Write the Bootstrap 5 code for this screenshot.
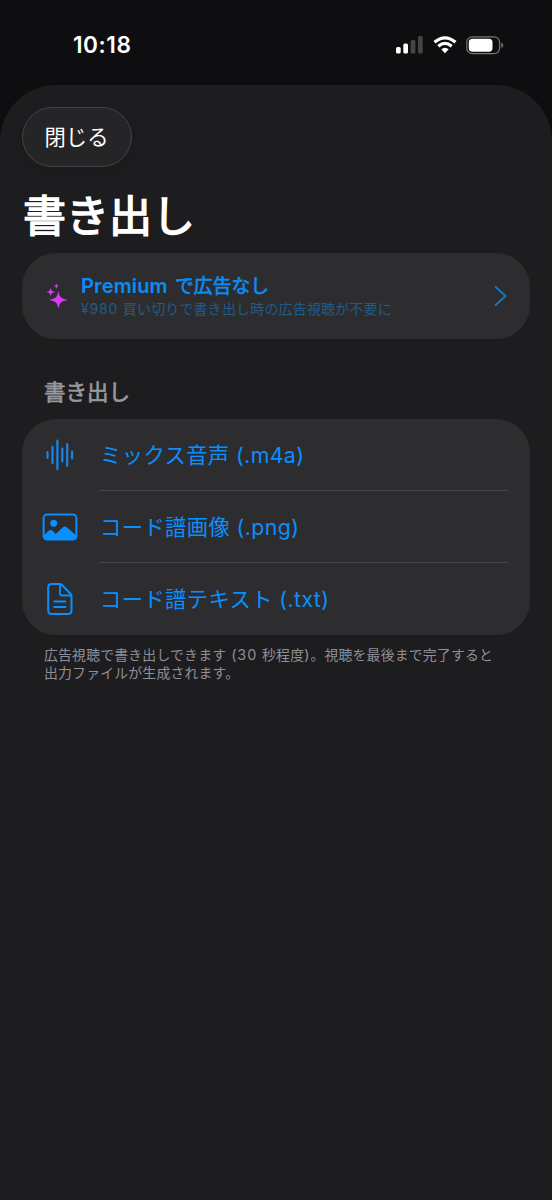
<!DOCTYPE html>
<html lang="ja" data-bs-theme="dark">
<head>
<meta charset="utf-8">
<meta name="viewport" content="width=device-width, initial-scale=1">
<title>書き出し</title>
<link href="https://cdn.jsdelivr.net/npm/bootstrap@5.3.0/dist/css/bootstrap.min.css" rel="stylesheet">
<style>
  body { background: #0e0e10; color: #fff; font-family: Inter, "Noto Sans CJK JP", sans-serif; min-height: 1200px; overflow: hidden; }
  svg { display: block; flex: none; }
  .statusbar { height: 85px; padding: 5px 48px 0 73px; }
  .clock { font-size: 22.6px; font-weight: 600; letter-spacing: .55px; }
  .wifi, .battery { margin-left: 9px; }
  .sheet { background: #1d1d1f; border-radius: 56px 56px 0 0; height: 1115px; padding: 22px 22px 0; }
  .close-btn { width: 110px; height: 60px; background: #252527; border: 1px solid #434345; color: #fff; font-size: 21.3px; line-height: 1; box-shadow: 0 4px 18px rgba(0,0,0,.12); padding: 2px 1px 0 0; }
  .page-title { font-size: 43px; line-height: 50px; font-weight: 400; -webkit-text-stroke: 1.5px #fff; margin: 0; padding: 24px 0 0 1px; height: 86px; }
  .panel { background: #2d2d2f; border-radius: 34px; }
  .premium { height: 86px; padding: 0 22px 0 24px; color: #0a8df8; }
  .premium-copy { margin-left: 13px; padding-top: 1px; }
  .premium-name { font-size: 18.8px; line-height: 23px; font-weight: 400; -webkit-text-stroke: .6px #0a8df8; }
  .premium-brand { font-size: 20px; font-weight: 600; letter-spacing: .15px; margin-right: 2px; -webkit-text-stroke: 0; }
  .premium-note { font-size: 14px; line-height: 21px; color: #225a88; letter-spacing: .16px; }
  .premium-price { letter-spacing: .8px; }
  .section-name { font-size: 21.5px; line-height: 30px; font-weight: 400; -webkit-text-stroke: .65px #98989f; color: #98989f; margin: 38px 0 12px 22px; }
  .export-row { height: 72px; padding: 0 22px 0 20px; color: #0a8fff; text-decoration: none; }
  .export-icon { width: 36px; margin-right: 21px; }
  .export-label { font-size: 21.3px; height: 72px; letter-spacing: .4px; padding: 2px 0 0 1px; }
  .export-row:not(:last-child) .export-label { border-bottom: 1px solid #454548; }
  .footnote { font-size: 13.9px; line-height: 18px; color: #8f8f96; margin: 11px 0 0 22px; letter-spacing: .16px; white-space: nowrap; }
  .footnote-num { font-size: 14.4px; line-height: 1; letter-spacing: .9px; }
</style>
</head>
<body>
<header class="statusbar d-flex align-items-center justify-content-between">
  <div class="clock">10:18</div>
  <div class="d-flex align-items-center">
    <svg width="28" height="18" viewBox="0 0 28 18"><g fill="#fff"><rect x="0" y="11" width="4.700" height="6.500" rx="1.500"/><rect x="7.300" y="7.500" width="4.700" height="10" rx="1.500"/></g><g fill="#454547"><rect x="14.700" y="4" width="4.700" height="13.500" rx="1.500"/><rect x="22" y="0" width="4.700" height="17.500" rx="1.500"/></g></svg>
    <svg class="wifi" width="24" height="18" viewBox="0 0 24 18" fill="none" stroke="#fff" stroke-width="3.200"><path d="M1.500 6.200Q12-2.600 22.500 6.200"/><path d="M5.300 10.200Q12 4.400 18.700 10.200"/><path d="M12 17.200L8.300 13.300Q12 10.200 15.700 13.300Z" fill="#fff" stroke="none"/></svg>
    <svg class="battery" width="38" height="19" viewBox="0 0 38 19"><rect x=".8" y=".8" width="32.800" height="16.900" rx="5.400" fill="none" stroke="#77777a" stroke-width="1.200"/><rect x="2.800" y="2.700" width="23.700" height="13" rx="3.700" fill="#fff"/><path d="M35.400 6.400q1.800.7 1.800 2.800t-1.800 2.800z" fill="#77777a"/></svg>
  </div>
</header>
<main class="sheet">
  <button class="close-btn btn rounded-pill d-flex align-items-center justify-content-center" type="button">閉じる</button>
  <h1 class="page-title">書き出し</h1>
  <a class="panel premium d-flex align-items-center text-decoration-none" href="#">
    <svg width="22" height="28" viewBox="0 0 22 28" fill="#d63cf5"><path d="M12.400 8.600c.9 6.600 2.400 8.200 9.300 9.300-6.900 1.100-8.400 2.700-9.300 9.700-.9-7-2.400-8.600-9.300-9.700 6.900-1.100 8.400-2.700 9.300-9.300z"/><path d="M4.700 5.300c.5 3.300 1.300 4.200 4.700 4.700-3.400.5-4.200 1.400-4.700 4.700-.5-3.300-1.300-4.200-4.700-4.700 3.400-.5 4.200-1.400 4.700-4.700z"/><path d="M10.400 1c.3 2 .9 2.700 3 3-2.100.3-2.700 1-3 3-.3-2-.9-2.700-3-3 2.100-.3 2.700-1 3-3z"/></svg>
    <div class="premium-copy flex-grow-1">
      <div class="premium-name"><span class="premium-brand">Premium</span> で広告なし</div>
      <div class="premium-note"><span class="premium-price">¥980 </span>買い切りで書き出し時の広告視聴が不要に</div>
    </div>
    <svg width="14" height="22" viewBox="0 0 14 22" fill="none" stroke="#1c75bd" stroke-width="2" stroke-linecap="round" stroke-linejoin="round"><path d="M1.700 2L11.500 11L1.700 20"/></svg>
  </a>
  <h2 class="section-name">書き出し</h2>
  <nav class="panel">
    <a class="export-row d-flex align-items-center" href="#">
      <span class="export-icon d-flex justify-content-center"><svg width="28" height="32" viewBox="0 0 28 32" stroke="#1786e8" stroke-width="2.200" stroke-linecap="round"><path d="M1.500 13.200v5.600M6.500 7.800v16.400M11.400 1.700v28.600M16.300 9.500v13M21.200 5.200v21.600M26.100 12.500v7"/></svg></span>
      <span class="export-label flex-grow-1 d-flex align-items-center">ミックス音声 (.m4a)</span>
    </a>
    <a class="export-row d-flex align-items-center" href="#">
      <span class="export-icon d-flex justify-content-center"><svg width="36" height="28" viewBox="0 0 36 28"><rect x="1.600" y="1.600" width="32.800" height="25" rx="3.500" fill="none" stroke="#0a8fff" stroke-width="2"/><circle cx="11.700" cy="10.300" r="3.500" fill="#0a8fff"/><path d="M1.600 22.500L7.500 17.300Q8.700 16.400 10 17.300L13.800 20.900L21 14.200Q22.900 12.900 24.700 14.200L34.400 22.500V24Q34.400 26.600 31.500 26.600H4.500Q1.600 26.600 1.600 24Z" fill="#0a8fff"/></svg></span>
      <span class="export-label flex-grow-1 d-flex align-items-center">コード譜画像 (.png)</span>
    </a>
    <a class="export-row d-flex align-items-center" href="#">
      <span class="export-icon d-flex justify-content-center"><svg width="26" height="32" viewBox="0 0 26 32" fill="none" stroke="#0a8fff" stroke-width="2" stroke-linecap="round" stroke-linejoin="round"><path d="M4.500 1H12.500Q14 1 15 2L23.500 10.700Q24.500 11.700 24.500 13.200V27.500Q24.500 31 21 31H4.500Q1.200 31 1.200 27.500V4.500Q1.200 1 4.500 1Z"/><path d="M13 1.500V10.500Q13 12.500 15 12.500H24M7.200 18.500H18.500M7.200 24H18.500" stroke-width="1.800"/></svg></span>
      <span class="export-label flex-grow-1 d-flex align-items-center">コード譜テキスト (.txt)</span>
    </a>
  </nav>
  <p class="footnote">広告視聴で書き出しできます<span class="footnote-num"> (30 </span>秒程度<span class="footnote-num">)</span>。視聴を最後まで完了すると<br>出力ファイルが生成されます。</p>
</main>
<script src="https://cdn.jsdelivr.net/npm/bootstrap@5.3.0/dist/js/bootstrap.bundle.min.js"></script>
</body>
</html>
